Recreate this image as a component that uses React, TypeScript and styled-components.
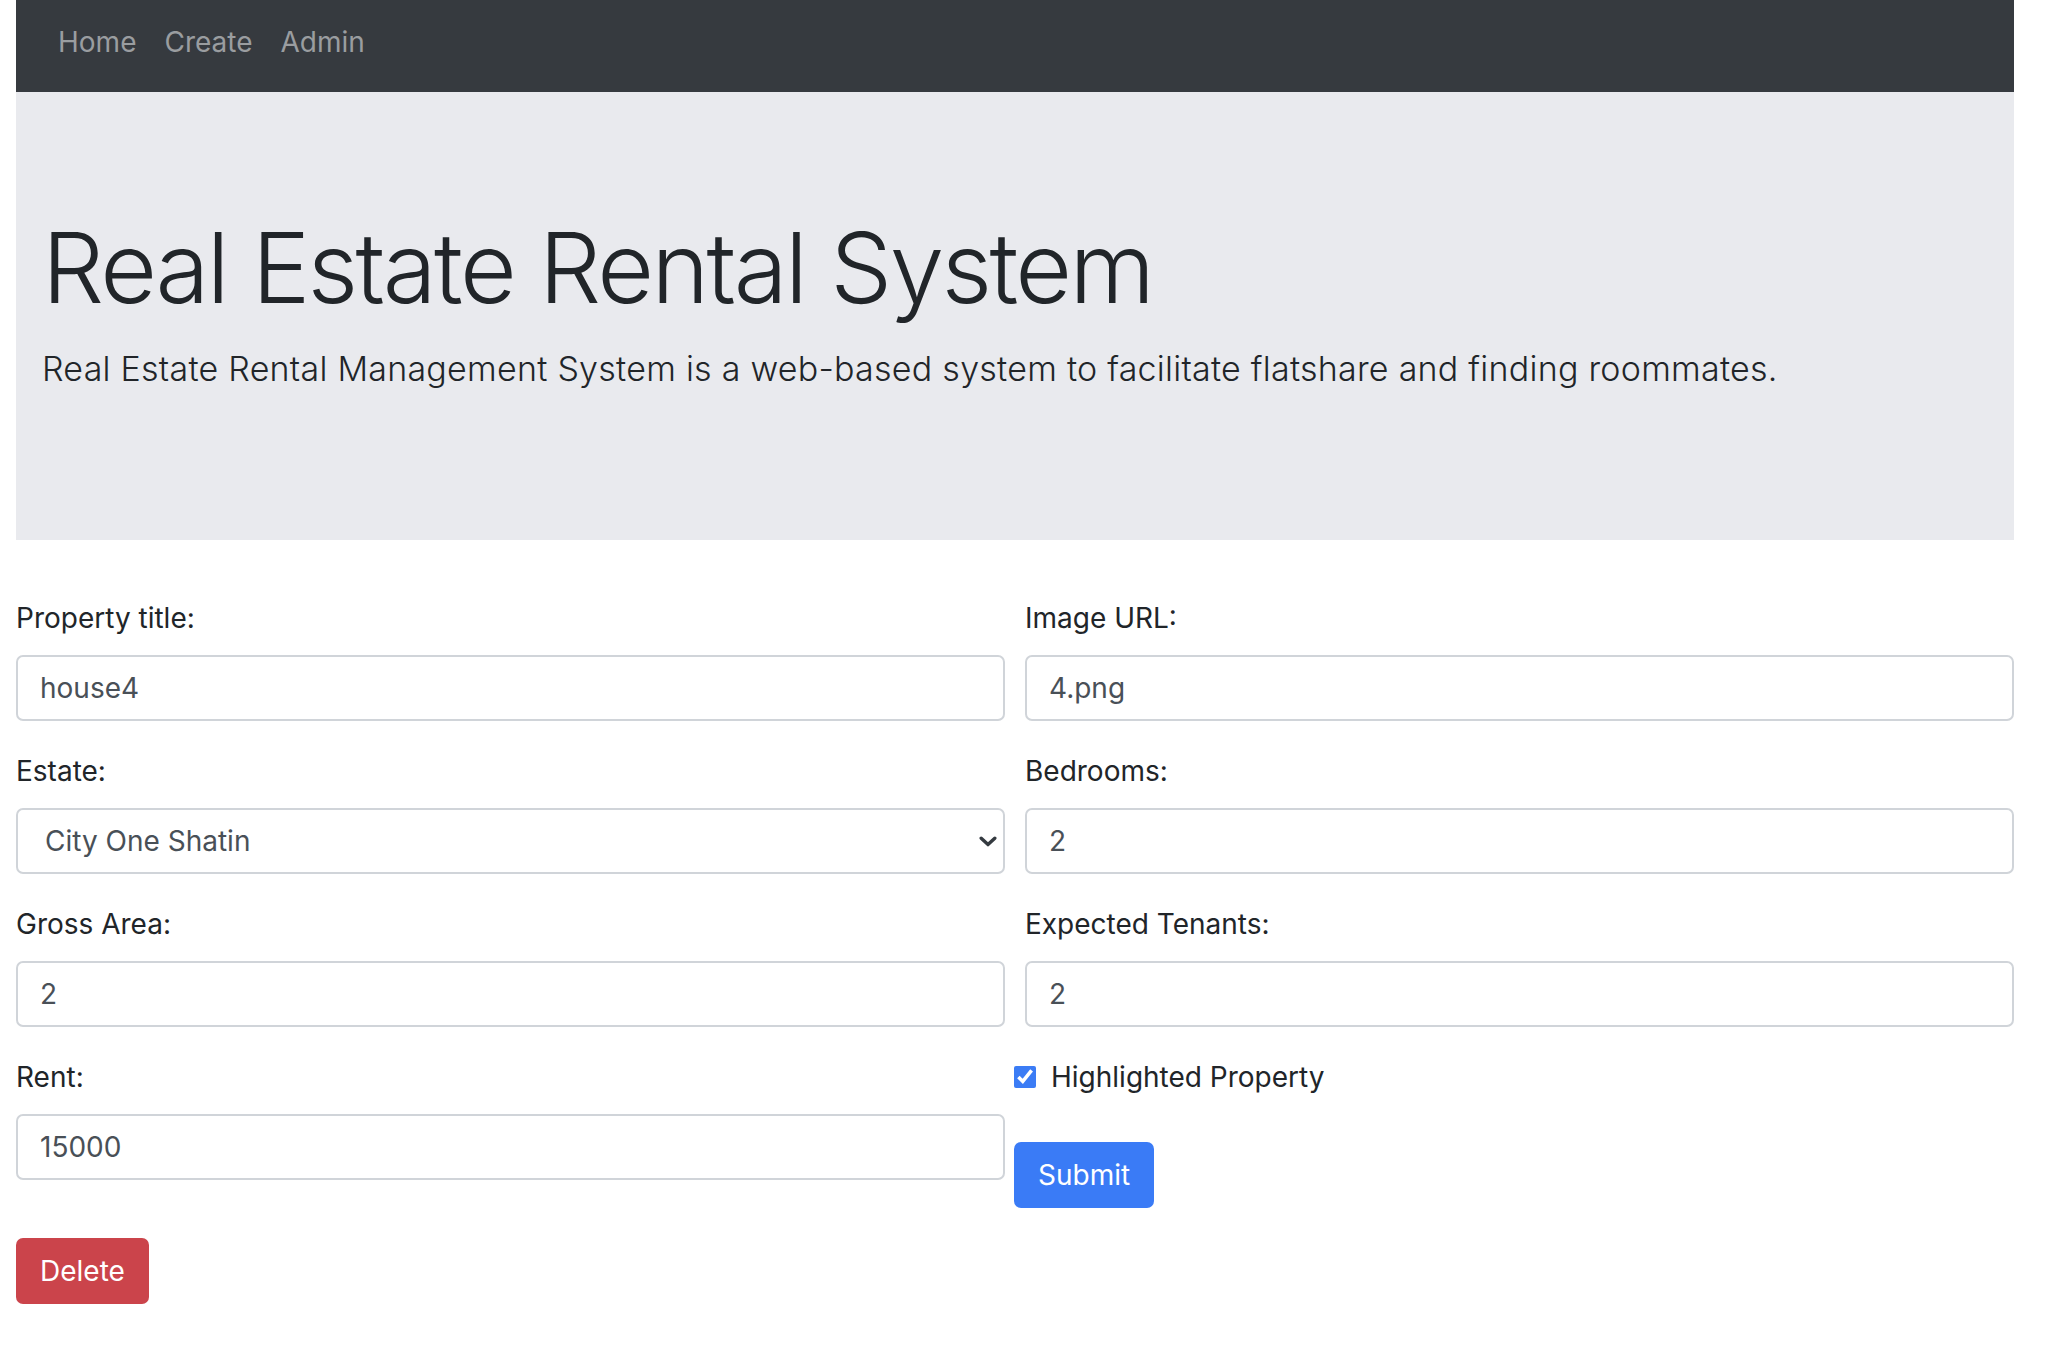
import { createGlobalStyle } from "styled-components";
import styled from "styled-components";

const GlobalStyle = createGlobalStyle`
    body {
        margin: 0;
        background: #ffffff;
        font-family: Inter, "Open Sans", "Liberation Sans", sans-serif;
        color: #212529;
    }
    * {
        box-sizing: border-box;
    }
`;

interface Field {
    label: string;
    value: string;
    kind?: "select";
}

const rows: Field[][] = [
    [
        { label: "Property title:", value: "house4" },
        { label: "Image URL:", value: "4.png" },
    ],
    [
        { label: "Estate:", value: "City One Shatin", kind: "select" },
        { label: "Bedrooms:", value: "2" },
    ],
    [
        { label: "Gross Area:", value: "2" },
        { label: "Expected Tenants:", value: "2" },
    ],
];

const estates = ["City One Shatin", "Festival City", "Tai Po Centre", "Laguna City"];

function FieldGroup({ field }: { field: Field }) {
    return (
        <Group>
            <Label>{field.label}</Label>
            {field.kind === "select" ? (
                <SelectWrap>
                    <Select defaultValue={field.value}>
                        {estates.map((e) => (
                            <option key={e} value={e}>
                                {e}
                            </option>
                        ))}
                    </Select>
                    <Chevron width="18" height="11" viewBox="0 0 18 11">
                        <path
                            d="M2.2 2.2 L9 8.6 L15.8 2.2"
                            fill="none"
                            stroke="#343a40"
                            strokeWidth="3.4"
                            strokeLinecap="round"
                            strokeLinejoin="round"
                        />
                    </Chevron>
                </SelectWrap>
            ) : (
                <Input type="text" defaultValue={field.value} />
            )}
        </Group>
    );
}

function App() {
    return (
        <Page>
            <GlobalStyle />
            <NavBar>
                <NavLink href="#">Home</NavLink>
                <NavLink href="#">Create</NavLink>
                <NavLink href="#">Admin</NavLink>
            </NavBar>

            <Jumbotron>
                <Title>Real Estate Rental System</Title>
                <Lead>
                    Real Estate Rental Management System is a web-based system to facilitate
                    flatshare and finding roommates.
                </Lead>
            </Jumbotron>

            <FormContainer onSubmit={(e) => e.preventDefault()}>
                <FieldGrid>
                    {rows.flat().map((f) => (
                        <FieldGroup key={f.label} field={f} />
                    ))}
                    <FieldGroup field={{ label: "Rent:", value: "15000" }} />
                    <SubmitCell>
                        <CheckRow>
                            <CheckBox type="checkbox" defaultChecked />
                            <CheckLabel>Highlighted Property</CheckLabel>
                        </CheckRow>
                        <Button type="submit" $variant="primary">
                            Submit
                        </Button>
                    </SubmitCell>
                </FieldGrid>
                <DeleteRow>
                    <Button type="button" $variant="danger">
                        Delete
                    </Button>
                </DeleteRow>
            </FormContainer>
        </Page>
    );
}

export default App;

const Page = styled.div`
    width: 2014px;
    padding-left: 16px;
`;

const NavBar = styled.nav`
    height: 92px;
    background: #363a3f;
    display: flex;
    align-items: flex-start;
    padding: 21px 0 0 28px;
`;

const NavLink = styled.a`
    font-size: 28px;
    line-height: 42px;
    color: #9a9da0;
    text-decoration: none;
    padding: 0 14px;
`;

const Jumbotron = styled.header`
    background: #e9eaee;
    padding: 117px 26px 146px;
`;

const Title = styled.h1`
    margin: 0 0 16px;
    font-size: 98px;
    font-weight: 300;
    line-height: 1.2;
    letter-spacing: -2.6px;
    color: #212529;
`;

const Lead = styled.p`
    margin: 0;
    font-size: 34px;
    font-weight: 300;
    line-height: 51px;
    letter-spacing: 0.25px;
    color: #212529;
`;

const FormContainer = styled.form`
    margin-top: 57px;
`;

const FieldGrid = styled.div`
    display: grid;
    grid-template-columns: 989px 989px;
    column-gap: 20px;
`;

const Group = styled.div`
    display: flex;
    flex-direction: column;
    margin-bottom: 29px;
`;

const Label = styled.label`
    font-size: 28px;
    line-height: 42px;
    margin-bottom: 16px;
    color: #212529;
`;

const Input = styled.input`
    height: 66px;
    width: 100%;
    padding: 0 22px;
    border: 2px solid #d0d4d9;
    border-radius: 7px;
    font-family: inherit;
    font-size: 28px;
    color: #495057;
    background: #ffffff;
    outline: none;
`;

const SelectWrap = styled.div`
    position: relative;
`;

const Select = styled.select`
    appearance: none;
    height: 66px;
    width: 100%;
    padding: 0 40px 0 27px;
    border: 2px solid #d0d4d9;
    border-radius: 7px;
    font-family: inherit;
    font-size: 28px;
    color: #495057;
    background: #ffffff;
    outline: none;
`;

const Chevron = styled.svg`
    position: absolute;
    right: 8px;
    top: 28px;
    pointer-events: none;
`;

const SubmitCell = styled.div`
    display: flex;
    flex-direction: column;
    align-items: flex-start;
    margin-left: -11px;
`;

const CheckRow = styled.div`
    display: flex;
    align-items: center;
    height: 42px;
    margin-bottom: 44px;
`;

const CheckBox = styled.input`
    width: 22px;
    height: 22px;
    margin: 0 15px 0 0;
    accent-color: #3b7cf5;
`;

const CheckLabel = styled.span`
    font-size: 28px;
    line-height: 42px;
    color: #212529;
`;

const DeleteRow = styled.div`
    display: flex;
    padding-top: 29px;
`;

const Button = styled.button<{ $variant: "primary" | "danger" }>`
    height: 66px;
    padding: 0 24px;
    border: none;
    border-radius: 7px;
    font-family: inherit;
    font-size: 28px;
    color: #ffffff;
    cursor: pointer;
    background: ${(p) => (p.$variant === "primary" ? "#3a7bf6" : "#cb444b")};
`;
